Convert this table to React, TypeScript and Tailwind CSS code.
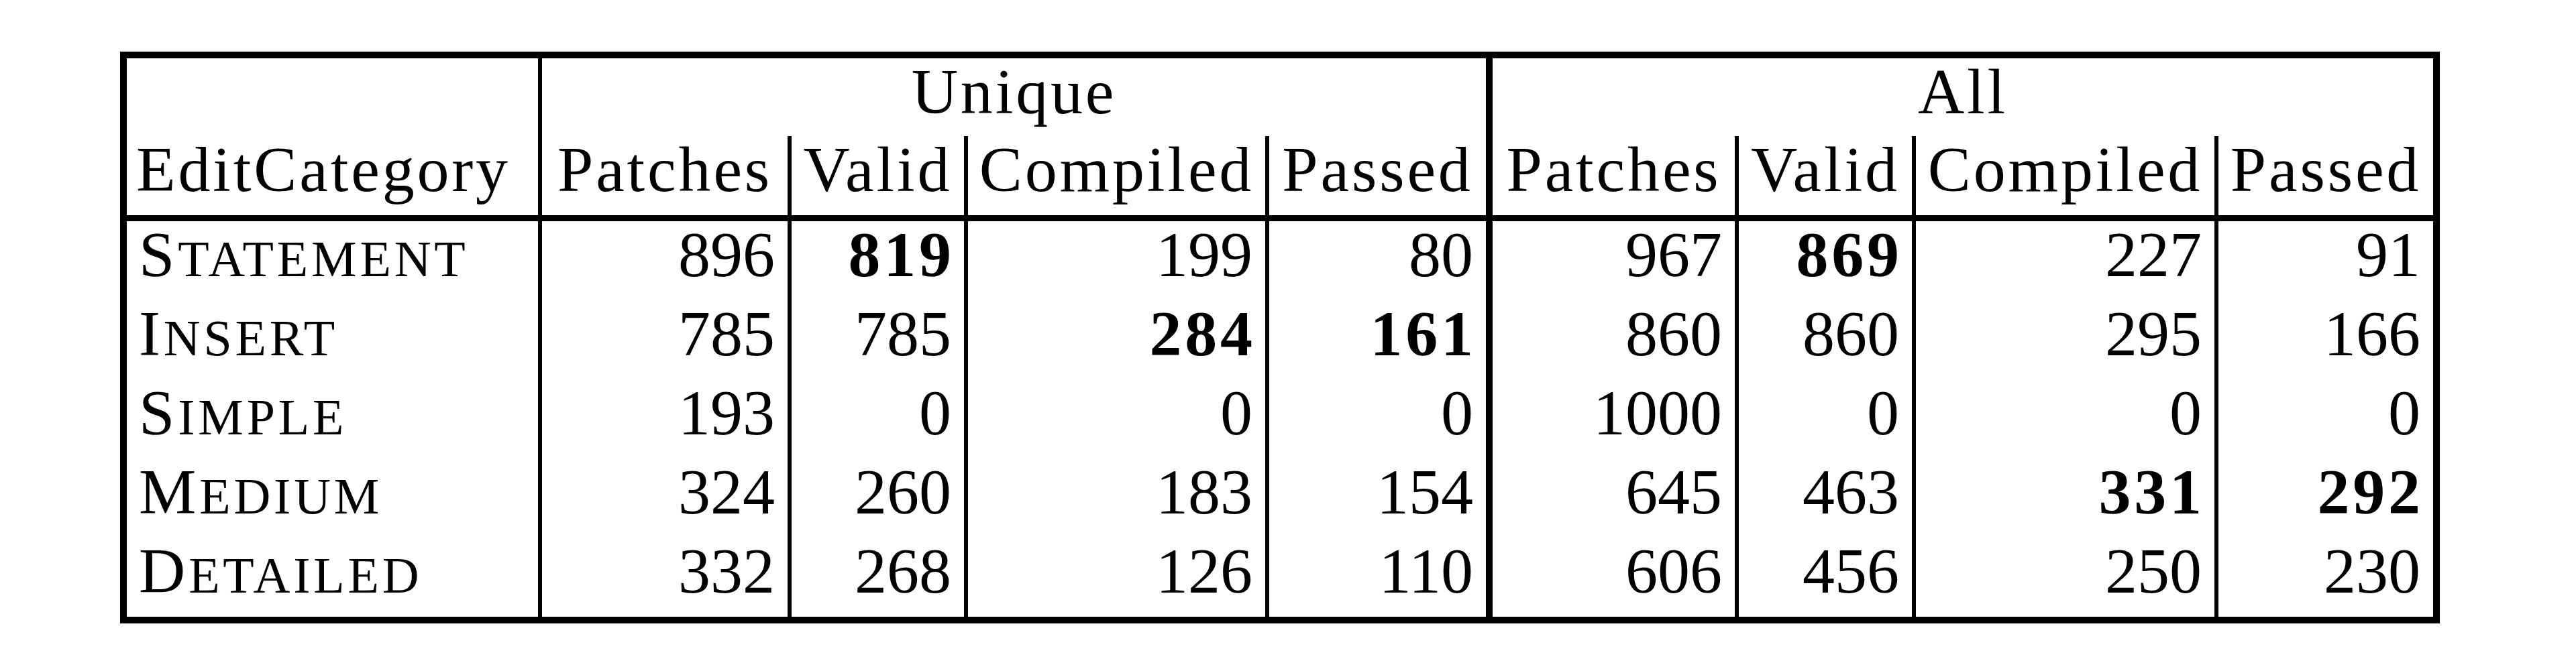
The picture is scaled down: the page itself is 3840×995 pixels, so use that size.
import React from 'react';

interface Row {
  label: string;
  values: number[];
  bold: number[];
}

const rows: Row[] = [
  { label: 'Statement', values: [896, 819, 199, 80, 967, 869, 227, 91], bold: [1, 5] },
  { label: 'Insert', values: [785, 785, 284, 161, 860, 860, 295, 166], bold: [2, 3] },
  { label: 'Simple', values: [193, 0, 0, 0, 1000, 0, 0, 0], bold: [] },
  { label: 'Medium', values: [324, 260, 183, 154, 645, 463, 331, 292], bold: [6, 7] },
  { label: 'Detailed', values: [332, 268, 126, 110, 606, 456, 250, 230], bold: [] },
];

const columns = ['Patches', 'Valid', 'Compiled', 'Passed'];

// widths include the right rule of each cell
const bodyCells = [
  'w-[372px] border-r-[6px]',
  'w-[263px] border-r-[6px]',
  'w-[449px] border-r-[6px]',
  'w-[333px] border-r-[10px]',
  'w-[367px] border-r-[6px]',
  'w-[264px] border-r-[6px]',
  'w-[451px] border-r-[6px]',
  'w-[320px]',
];

const uniqueHead = [
  'w-[372px] border-r-[6px]',
  'w-[263px] border-r-[6px]',
  'w-[449px] border-r-[6px]',
  'w-[323px]',
];

const allHead = [
  'w-[367px] border-r-[6px]',
  'w-[264px] border-r-[6px]',
  'w-[451px] border-r-[6px]',
  'w-[320px]',
];

const Group = ({ title, cells, className }: { title: string; cells: string[]; className: string }) => (
  <div className={`flex flex-col border-black ${className}`}>
    <div className="h-[116px] text-center tracking-[0.04em]">{title}</div>
    <div className="flex">
      {cells.map((cls, i) => (
        <div key={columns[i]} className={`h-[118px] border-black text-center tracking-[0.04em] ${cls}`}>
          {columns[i]}
        </div>
      ))}
    </div>
  </div>
);

const App = () => {
  return (
    <div className="min-h-screen bg-white pl-[179px] pt-[77px] font-['Liberation_Serif',serif] text-[96px] leading-[100px] text-black">
      <div className="inline-flex flex-col border-[10px] border-black">
        <div className="flex border-b-[9px] border-black">
          <div className="flex h-[234px] w-[619px] flex-col justify-end border-r-[6px] border-black">
            <div className="h-[118px] pl-[14px] tracking-[0.04em]">EditCategory</div>
          </div>
          <Group title="Unique" cells={uniqueHead} className="w-[1417px] border-r-[10px]" />
          <Group title="All" cells={allHead} className="w-[1402px]" />
        </div>

        {rows.map((row) => (
          <div key={row.label} className="flex h-[118px]">
            <div className="w-[619px] border-r-[6px] border-black pl-[18px] tracking-[0.05em]">
              {row.label[0]}
              <span className="text-[76px] uppercase">{row.label.slice(1)}</span>
            </div>
            {row.values.map((v, i) => (
              <div key={i} className={`border-black pr-[19px] text-right ${bodyCells[i]}`}>
                {row.bold.includes(i) ? (
                  <span className="mr-[-0.05em] font-bold tracking-[0.05em]">{v}</span>
                ) : (
                  v
                )}
              </div>
            ))}
          </div>
        ))}
      </div>
    </div>
  );
};

export default App;
